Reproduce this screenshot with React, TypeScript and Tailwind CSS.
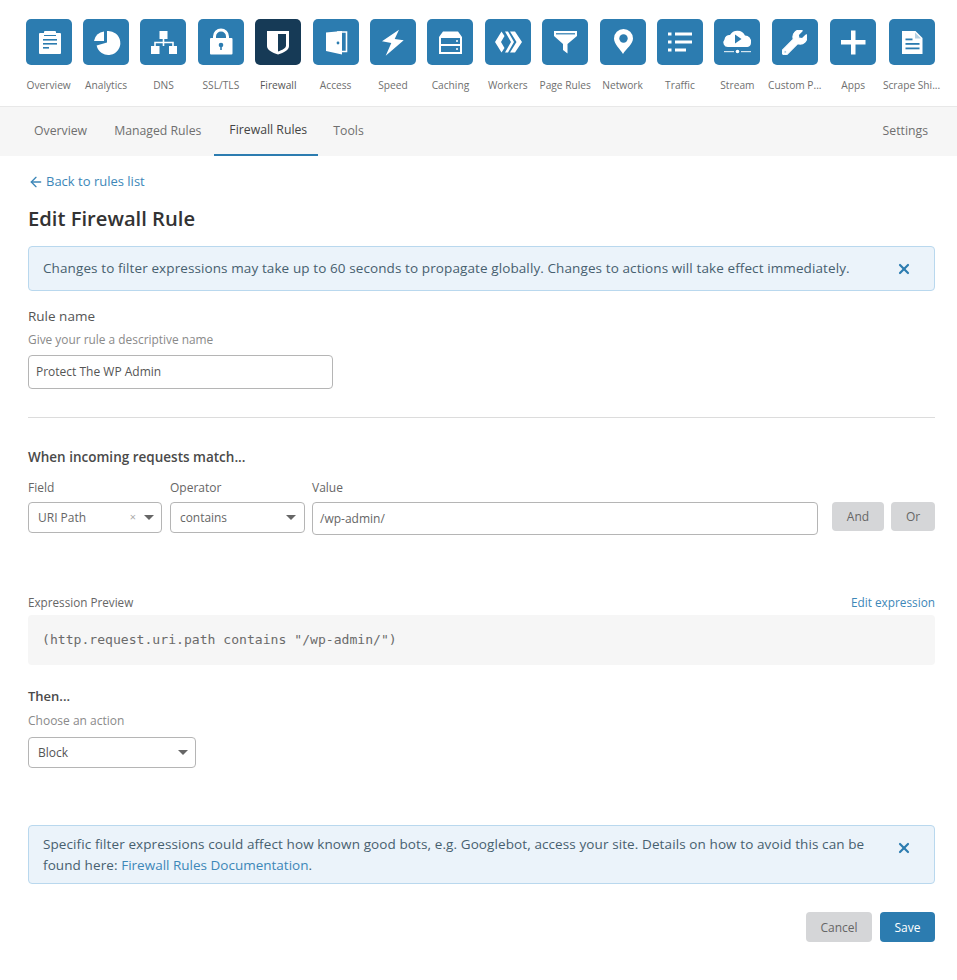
import React from 'react'
import { FaWrench } from 'react-icons/fa'
import { ArrowLeft, X } from 'lucide-react'

const BLUE = '#2c7cb0'

type IconProps = { bg: string }

const OverviewIcon = ({ bg }: IconProps) => (
  <>
    <rect x="13" y="14" width="22" height="21" rx="1" fill="#fff" />
    <rect x="18" y="12" width="12" height="4" rx="1" fill="#fff" />
    <rect x="18" y="16" width="12" height="1" fill={bg} />
    <rect x="17" y="20" width="14" height="1.6" fill={bg} />
    <rect x="17" y="24" width="14" height="1.6" fill={bg} />
    <rect x="17" y="28" width="6" height="1.6" fill={bg} />
  </>
)

const AnalyticsIcon = (_: IconProps) => (
  <>
    <path d="M24 12 A12 12 0 1 1 13.6 26.5 L24 23.5 Z" fill="#fff" />
    <path d="M21 12.5 A11 11 0 0 0 11 22 L21 22 Z" fill="#fff" />
  </>
)

const DnsIcon = (_: IconProps) => (
  <>
    <rect x="19.5" y="12" width="8" height="8" fill="#fff" />
    <rect x="11" y="27" width="8.5" height="8" fill="#fff" />
    <rect x="29" y="27" width="8" height="8" fill="#fff" />
    <path d="M23.5 20V27M15 27V23.5H33V27" stroke="#fff" strokeWidth="1.6" fill="none" />
  </>
)

const LockIcon = ({ bg }: IconProps) => (
  <>
    <path d="M16.5 19V17.5a6.5 6.5 0 0 1 13 0V19" stroke="#fff" strokeWidth="3" fill="none" />
    <rect x="12" y="19" width="22.5" height="16.5" rx="1" fill="#fff" />
    <circle cx="23" cy="26" r="2.3" fill={bg} />
    <rect x="22.2" y="26" width="1.6" height="5" fill={bg} />
  </>
)

const ShieldIcon = ({ bg }: IconProps) => (
  <>
    <path d="M12 12H34V27C34 31 29 33.5 23 35.5C17 33.5 12 31 12 27Z" fill="#fff" />
    <path d="M23 15H31V26.5C31 29.5 27 31 23 32.5Z" fill={bg} />
  </>
)

const AccessIcon = ({ bg }: IconProps) => (
  <>
    <path d="M24 13H33.5V32.5H29" stroke="#fff" strokeWidth="1.6" fill="none" />
    <path d="M13 13.5L29 12V35.5L13 32Z" fill="#fff" />
    <circle cx="25" cy="24" r="1.4" fill={bg} />
  </>
)

const SpeedIcon = (_: IconProps) => (
  <path d="M29 10.7L12 22.3L21.3 24L15.7 36.7L33.7 21.3L24.7 20Z" fill="#fff" />
)

const CachingIcon = ({ bg }: IconProps) => (
  <>
    <path d="M16 12.5H31L35 18V35H12V18Z" fill="#fff" />
    <rect x="14" y="19" width="19" height="6" fill={bg} />
    <rect x="14" y="27" width="19" height="6" fill={bg} />
    <circle cx="30" cy="22" r="1" fill="#fff" />
    <circle cx="30" cy="30" r="1" fill="#fff" />
  </>
)

const WorkersIcon = (_: IconProps) => (
  <>
    <path d="M10 23L16.5 12.5L19.5 17L16 23L19.5 29L16.5 33.500Z" fill="#fff" />
    <path d="M20 12.500H23L29 23L23 33.500H20L26 23Z" fill="#fff" />
    <path d="M25 12.500H30L37 23L30 33.500H25L31.500 23Z" fill="#fff" />
  </>
)

const PageRulesIcon = ({ bg }: IconProps) => (
  <>
    <path d="M12 12H35V17L25.500 25V34.500L21 31V25L12 17Z" fill="#fff" />
    <rect x="14" y="14.200" width="19" height="1.200" fill={bg} />
  </>
)

const NetworkIcon = ({ bg }: IconProps) => (
  <>
    <path d="M23 35C20 30 14 25 14 19.500A9.500 9.500 0 0 1 33 19.500C33 25 26 30 23 35Z" fill="#fff" />
    <circle cx="23.500" cy="19.500" r="4.200" fill={bg} />
  </>
)

const TrafficIcon = (_: IconProps) => (
  <>
    <rect x="11" y="13.500" width="3.500" height="3" fill="#fff" />
    <rect x="11" y="21.500" width="3.500" height="3" fill="#fff" />
    <rect x="11" y="29.500" width="3.500" height="3" fill="#fff" />
    <rect x="18" y="13.500" width="17" height="3" fill="#fff" />
    <rect x="18" y="21.500" width="17" height="3" fill="#fff" />
    <rect x="18" y="29.500" width="11" height="3" fill="#fff" />
  </>
)

const StreamIcon = ({ bg }: IconProps) => (
  <>
    <path d="M14 28A4.500 4.500 0 0 1 10.500 20.500A5 5 0 0 1 16 16A8.500 8.500 0 0 1 31 16.500A6 6 0 0 1 37 23.500A4.500 4.500 0 0 1 33.500 28Z" fill="#fff" />
    <path d="M21 15.500L27.500 20L21 24.500Z" fill={bg} />
    <rect x="10" y="32" width="10" height="1.200" fill="#fff" opacity="0.8" />
    <rect x="27" y="32" width="10" height="1.200" fill="#fff" opacity="0.8" />
    <circle cx="23.500" cy="32.500" r="1.800" fill="#fff" />
  </>
)

const AppsIcon = (_: IconProps) => (
  <>
    <rect x="11" y="21" width="24.500" height="4.500" fill="#fff" />
    <rect x="21" y="11.500" width="4.500" height="24" fill="#fff" />
  </>
)

const ScrapeIcon = ({ bg }: IconProps) => (
  <>
    <path d="M13 12H26.500L33.500 19V35H13Z" fill="#fff" />
    <path d="M26 13.500V19.500H32Z" fill={bg} opacity="0.35" />
    <rect x="16.500" y="19.500" width="7" height="1.800" fill={bg} />
    <rect x="16.500" y="24" width="14" height="1.800" fill={bg} />
    <rect x="16.500" y="28.500" width="14" height="1.800" fill={bg} />
  </>
)

const WrenchIcon = (_: IconProps) => null

const navItems = [
  { label: 'Overview', Icon: OverviewIcon },
  { label: 'Analytics', Icon: AnalyticsIcon },
  { label: 'DNS', Icon: DnsIcon },
  { label: 'SSL/TLS', Icon: LockIcon },
  { label: 'Firewall', Icon: ShieldIcon, active: true },
  { label: 'Access', Icon: AccessIcon },
  { label: 'Speed', Icon: SpeedIcon },
  { label: 'Caching', Icon: CachingIcon },
  { label: 'Workers', Icon: WorkersIcon },
  { label: 'Page Rules', Icon: PageRulesIcon },
  { label: 'Network', Icon: NetworkIcon },
  { label: 'Traffic', Icon: TrafficIcon },
  { label: 'Stream', Icon: StreamIcon },
  { label: 'Custom P...', Icon: WrenchIcon, wrench: true },
  { label: 'Apps', Icon: AppsIcon, nudge: true },
  { label: 'Scrape Shi...', Icon: ScrapeIcon, nudge: true },
]

// Small select caret used by the dropdowns
const Caret = () => <span className="w-0 h-0 border-x-[5px] border-x-transparent border-t-[5px] border-t-[#666]" />

const Banner = ({ children, className, iconClass }: { children: React.ReactNode; className: string; iconClass?: string }) => (
  <div className={`flex justify-between bg-[#ebf3fa] border border-[#b9d8ee] rounded-[4px] pl-[14px] pr-[22px] text-[13.5px] text-[#47606f] tracking-[0.1px] ${className}`}>
    <div>{children}</div>
    <X className={`text-[#2c7cb0] shrink-0 ${iconClass ?? ''}`} size={16} strokeWidth={3.2} />
  </div>
)

export default function App() {
  return (
    <div className="min-h-[980px] bg-white text-[#4d4d4d] font-['Open_Sans',sans-serif]">
      <div className="flex h-[107px] pl-[20px] pt-[19px] border-b border-[#e8e8e8]">
        {navItems.map(({ label, Icon, active, wrench, nudge }) => {
          const bg = active ? '#163a56' : BLUE
          return (
            <div key={label} className={`w-[57.4px] shrink-0 flex flex-col items-center ${nudge ? 'ml-[1px]' : ''}`}>
              <div className={`w-[46px] h-[46px] rounded-[5px] flex items-center justify-center ${active ? 'bg-[#163a56]' : 'bg-[#2c7cb0]'}`}>
                {wrench ? (
                  <FaWrench className="text-white" size={25} stroke="currentColor" strokeWidth={24} />
                ) : (
                  <svg width="46" height="46" viewBox="0 0 46 46">
                    <Icon bg={bg} />
                  </svg>
                )}
              </div>
              <span className={`mt-[12px] text-[10.2px] leading-[16px] whitespace-nowrap ${active ? 'text-[#555]' : 'text-[#6f6f6f]'}`}>{label}</span>
            </div>
          )
        })}
      </div>

      <div className="flex h-[49px] bg-[#f6f6f6] pl-[20px] pr-[29px] text-[12.25px] text-[#6f6f6f]">
        <div className="pl-[14px] pr-[13px] flex items-center">Overview</div>
        <div className="pl-[14px] pr-[13px] flex items-center">Managed Rules</div>
        <div className="px-[15px] flex items-center text-[#444] border-b-2 border-[#2c7cb0] w-[104px] whitespace-nowrap">Firewall Rules</div>
        <div className="px-[15px] flex items-center">Tools</div>
        <div className="ml-auto flex items-center">Settings</div>
      </div>

      <div className="pl-[28px] pr-[22px]">
        <a className="mt-[17px] flex items-center gap-[2px] h-[18px] text-[13px] text-[#3d87b8]">
          <ArrowLeft size={16} strokeWidth={2} />
          Back to rules list
        </a>
        <h1 className="mt-[12px] text-[20.2px] leading-[30px] font-semibold text-[#333]">Edit Firewall Rule</h1>

        <Banner className="mt-[13px] h-[45px] items-center">
          Changes to filter expressions may take up to 60 seconds to propagate globally. Changes to actions will take effect immediately.
        </Banner>

        <div className="mt-[16px] text-[13.5px] leading-[18px] text-[#555]">Rule name</div>
        <div className="mt-[5px] text-[11.9px] leading-[18px] text-[#8a8a8a]">Give your rule a descriptive name</div>
        <div className="mt-[7px] w-[305px] h-[34px] border border-[#b5b5b5] rounded-[4px] flex items-center pl-[7px] text-[12px] text-[#555]">Protect The WP Admin</div>

        <div className="mt-[28px] border-t border-[#dcdcdc]" />

        <div className="mt-[30px] text-[13.5px] leading-[18px] font-semibold text-[#4a4a4a]">When incoming requests match...</div>

        <div className="mt-[13px] flex items-start">
          <div className="w-[134px] mr-[8px]">
            <div className="text-[12px] leading-[18px] text-[#666]">Field</div>
            <div className="mt-[5px] h-[31px] border border-[#b5b5b5] rounded-[4px] flex items-center pl-[9px] pr-[7px] text-[12px] text-[#666]">
              URI Path
              <span className="ml-auto mr-[8px] text-[11px] text-[#aaa]">×</span>
              <Caret />
            </div>
          </div>
          <div className="w-[135px] mr-[7px]">
            <div className="text-[12px] leading-[18px] text-[#666]">Operator</div>
            <div className="mt-[5px] h-[31px] border border-[#b5b5b5] rounded-[4px] flex items-center justify-between pl-[9px] pr-[8px] text-[11.9px] text-[#666]">
              contains
              <Caret />
            </div>
          </div>
          <div className="w-[506px] mr-[14px]">
            <div className="text-[12px] leading-[18px] text-[#666]">Value</div>
            <div className="mt-[5px] h-[33px] border border-[#b5b5b5] rounded-[4px] flex items-center pl-[7px] text-[12px] text-[#666]">/wp-admin/</div>
          </div>
          <div className="mt-[23px] flex gap-[7px]">
            <button className="w-[52px] h-[29px] pt-[1px] bg-[#d5d6d8] rounded-[4px] text-[12px] text-[#666]">And</button>
            <button className="w-[44px] h-[29px] pt-[1px] bg-[#d5d6d8] rounded-[4px] text-[12px] text-[#666]">Or</button>
          </div>
        </div>

        <div className="mt-[58px] flex items-center justify-between leading-[18px]">
          <span className="text-[11.7px] text-[#666]">Expression Preview</span>
          <span className="text-[11.8px] text-[#3d87b8]">Edit expression</span>
        </div>
        <div className="mt-[4px] h-[50px] bg-[#f6f6f6] rounded-[4px] flex items-center pl-[14px] font-['DejaVu_Sans_Mono',monospace] text-[13.1px] text-[#6b6b6b]">
          (http.request.uri.path contains "/wp-admin/")
        </div>

        <div className="mt-[22px] text-[13px] leading-[18px] font-semibold text-[#4a4a4a]">Then...</div>
        <div className="mt-[7px] text-[12px] leading-[18px] text-[#8a8a8a]">Choose an action</div>
        <div className="mt-[7px] w-[168px] h-[31px] border border-[#b5b5b5] rounded-[4px] flex items-center justify-between pl-[9px] pr-[7px] text-[12px] text-[#555]">
          Block
          <Caret />
        </div>

        <Banner className="mt-[57px] h-[59px] pt-[8px] leading-[21px] items-start" iconClass="mt-[6px]">
          Specific filter expressions could affect how known good bots, e.g. Googlebot, access your site. Details on how to avoid this can be found here:{' '}
          <a className="text-[#3d87b8] tracking-normal">Firewall Rules Documentation</a>.
        </Banner>

        <div className="mt-[28px] flex justify-end gap-[8px]">
          <button className="w-[66px] h-[30px] pt-[2px] bg-[#d5d6d8] rounded-[4px] text-[12px] text-[#666]">Cancel</button>
          <button className="w-[55px] h-[30px] pt-[2px] bg-[#2c7cb0] rounded-[4px] text-[12px] text-white">Save</button>
        </div>
      </div>
    </div>
  )
}
